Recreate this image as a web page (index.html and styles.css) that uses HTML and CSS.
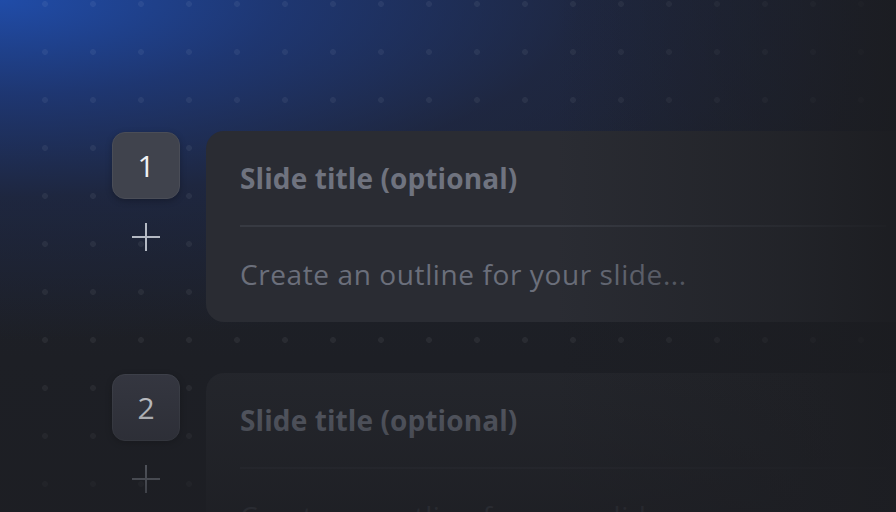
FILE: index.html
```html
<!DOCTYPE html>
<html lang="en">
<head>
<meta charset="utf-8">
<link rel="stylesheet" href="styles.css">
</head>
<body>
<div class="scene">
  <div class="list">
    <div class="row">
      <div class="rail">
        <div class="num">1</div>
        <div class="add"><svg width="28" height="30" viewBox="0 0 28 30"><path d="M14 1V29M0 15H28" stroke="currentColor" stroke-width="2" fill="none"/></svg></div>
      </div>
      <div class="card">
        <div class="title">Slide title (optional)</div>
        <div class="sep"></div>
        <div class="body">Create an outline for your slide...</div>
      </div>
    </div>
    <div class="row dim">
      <div class="rail">
        <div class="num">2</div>
        <div class="add"><svg width="28" height="30" viewBox="0 0 28 30"><path d="M14 1V29M0 15H28" stroke="currentColor" stroke-width="2" fill="none"/></svg></div>
      </div>
      <div class="card">
        <div class="title">Slide title (optional)</div>
        <div class="sep"></div>
        <div class="body">Create an outline for your slide...</div>
      </div>
    </div>
  </div>
</div>
</body>
</html>
```
FILE: styles.css
```css
html, body {
  margin: 0;
  padding: 0;
}
body {
  width: 896px;
  height: 512px;
  overflow: hidden;
  background: #1d1f25;
  font-family: "Open Sans", "Noto Sans", sans-serif;
}
.scene {
  position: relative;
  width: 896px;
  height: 512px;
  overflow: hidden;
  background:
    radial-gradient(circle, rgba(255,255,255,0.055) 2.6px, transparent 3.2px) 21px -20px / 48px 48px,
    radial-gradient(ellipse 1000px 340px at 0 0, rgba(32,76,168,1) 0%, rgba(30,60,132,0.78) 28%, rgba(30,44,84,0.5) 58%, rgba(29,31,37,0) 100%),
    linear-gradient(180deg, #1f2330 0%, #1d1f25 70%);
}
.scene::after {
  content: "";
  position: absolute;
  inset: 0;
  pointer-events: none;
  background:
    linear-gradient(90deg, rgba(27,28,32,0) 62%, rgba(27,28,32,0.55) 88%, rgba(27,28,32,0.9) 100%);
}
.scene::before {
  content: "";
  position: absolute;
  inset: 0;
  z-index: 2;
  pointer-events: none;
  background: linear-gradient(180deg, rgba(29,30,35,0) 360px, rgba(29,30,35,0.35) 440px, rgba(29,30,35,0.75) 512px);
}
.list {
  display: flex;
  flex-direction: column;
  gap: 51px;
  padding: 131px 0 0 112px;
}
.row {
  display: flex;
  gap: 26px;
  align-items: flex-start;
}
.rail {
  width: 68px;
  display: flex;
  flex-direction: column;
  align-items: center;
  gap: 23px;
  padding-top: 1px;
}
.num {
  width: 68px;
  height: 67px;
  box-sizing: border-box;
  border: 1.5px solid #4a4d57;
  border-radius: 13px;
  background: #40434d;
  color: #f0f1f4;
  font-size: 30px;
  display: flex;
  align-items: center;
  justify-content: center;
  box-shadow: 0 2px 6px rgba(0,0,0,0.25);
}
.add {
  width: 28px;
  height: 30px;
  color: #b4b9c3;
}
.add svg { display: block; }
.card {
  width: 720px;
  flex: none;
  box-sizing: border-box;
  height: 191px;
  border-radius: 18px;
  background: #2a2c33;
  padding: 0 0 0 34px;
  display: flex;
  flex-direction: column;
}
.title {
  height: 94px;
  display: flex;
  align-items: center;
  font-size: 28px;
  font-weight: 700;
  letter-spacing: 0.1px;
  color: #6f737f;
  padding-bottom: 1px;
  box-sizing: border-box;
}
.sep {
  height: 2px;
  background: #373a42;
  margin-right: 40px;
}
.body {
  height: 95px;
  display: flex;
  align-items: center;
  font-size: 28px;
  letter-spacing: 0.6px;
  color: #6b6f7b;
  padding-bottom: 2px;
  box-sizing: border-box;
}
.dim .num {
  background: #363842;
  border-color: #3f424b;
  color: #d8dadf;
}
.dim .add { color: #7e838d; }
.dim .card { background: #24262c; }
.dim .title { color: #5e626d; }
.dim .sep { background: #2c2e35; }
.dim .body { color: #4a4e58; }
```
